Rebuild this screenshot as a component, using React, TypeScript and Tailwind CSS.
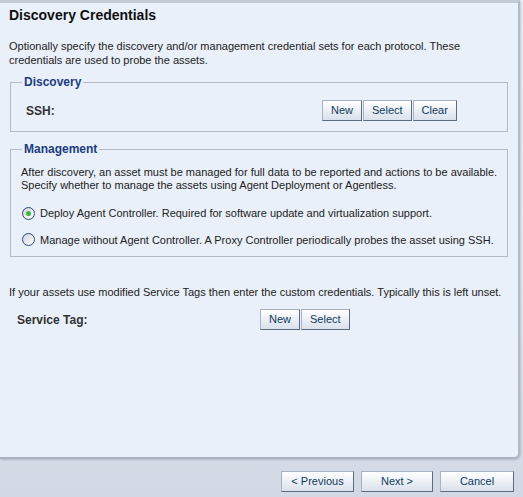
import React from 'react';

const font = { fontFamily: '"Liberation Sans", Arial, sans-serif' };

const Btn = ({ label, className = '' }: { label: string; className?: string }) => (
  <button
    className={`h-[21px] px-[8px] text-[11px] leading-none whitespace-nowrap text-[#0f3a5c] bg-gradient-to-b from-white to-[#d9e1ec] border border-[#a7b2c2] border-r-[#5d6b80] border-b-[#5d6b80] ${className}`}
  >
    {label}
  </button>
);

const Radio = ({ checked }: { checked?: boolean }) => (
  <span className="w-[13px] h-[13px] rounded-full border border-[#2c4c7c] bg-gradient-to-br from-[#cfd4db] to-white flex items-center justify-center shrink-0">
    {checked && <span className="w-[5px] h-[5px] rounded-full bg-[#3bb53b]" />}
  </span>
);

export default function App() {
  return (
    <div style={font} className="w-[523px] h-[497px] flex flex-col bg-gradient-to-b from-[#e9ecf4] via-[#e6eaf2] to-[#d2d9e4] text-[11px] text-[#222]">
      {/* Panel */}
      <div className="h-[459px] mr-[3px] bg-[#e9f0f9] border-t-[3px] border-t-[#c3cad6] border-r-2 border-r-[#b3bac7] border-b-2 border-b-[#aab2bf] rounded-br-[6px] shadow-[1px_1px_2px_rgba(0,0,0,0.15)] flex flex-col">
        <h1 className="pl-[9px] pt-[3px] h-[28px] text-[14px] font-bold text-[#111] leading-[18px]">
          Discovery Credentials
        </h1>
        <p className="pl-[9px] pr-2 mt-[8px] leading-[14px]">
          Optionally specify the discovery and/or management credential sets for each protocol. These credentials are used to probe the assets.
        </p>

        {/* Discovery */}
        <fieldset className="mx-[10px] mt-[8px] h-[57px] border border-[#b2b9c7]">
          <legend className="ml-[11px] px-[2px] text-[12px] font-bold text-[#1c3d7f] leading-[14px]">Discovery</legend>
          <div className="flex items-center mt-[11px] pl-[15px]">
            <span className="w-[296px] font-bold text-[12px] text-[#333]">SSH:</span>
            <div className="flex gap-[1px]">
              <Btn label="New" />
              <Btn label="Select" />
              <Btn label="Clear" />
            </div>
          </div>
        </fieldset>

        {/* Management */}
        <fieldset className="mx-[10px] mt-[10px] h-[115px] border border-[#b2b9c7]">
          <legend className="ml-[11px] px-[2px] text-[12px] font-bold text-[#1c3d7f] leading-[14px]">Management</legend>
          <div className="pl-[10px]">
            <p className="mt-[10px] leading-[13px]">
              After discovery, an asset must be managed for full data to be reported and actions to be available. Specify whether to manage the assets using Agent Deployment or Agentless.
            </p>
            <label className="flex items-center gap-[5px] mt-[13px] pl-[1px]">
              <Radio checked />
              <span>Deploy Agent Controller. Required for software update and virtualization support.</span>
            </label>
            <label className="flex items-center gap-[5px] mt-[10px] pl-[1px]">
              <Radio />
              <span>Manage without Agent Controller. A Proxy Controller periodically probes the asset using SSH.</span>
            </label>
          </div>
        </fieldset>

        <p className="pl-[9px] mt-[28px] leading-[14px]">
          If your assets use modified Service Tags then enter the custom credentials. Typically this is left unset.
        </p>
        <div className="flex items-center mt-[10px] pl-[17px]">
          <span className="w-[243px] font-bold text-[12px] text-[#333]">Service Tag:</span>
          <div className="flex gap-[1px]">
            <Btn label="New" />
            <Btn label="Select" />
          </div>
        </div>
      </div>

      {/* Footer */}
      <div className="flex justify-end gap-[7px] pr-[9px] mt-[12px]">
        <Btn label="< Previous" className="w-[73px] px-0" />
        <Btn label="Next >" className="w-[72px] px-0" />
        <Btn label="Cancel" className="w-[74px] px-0" />
      </div>
    </div>
  );
}
